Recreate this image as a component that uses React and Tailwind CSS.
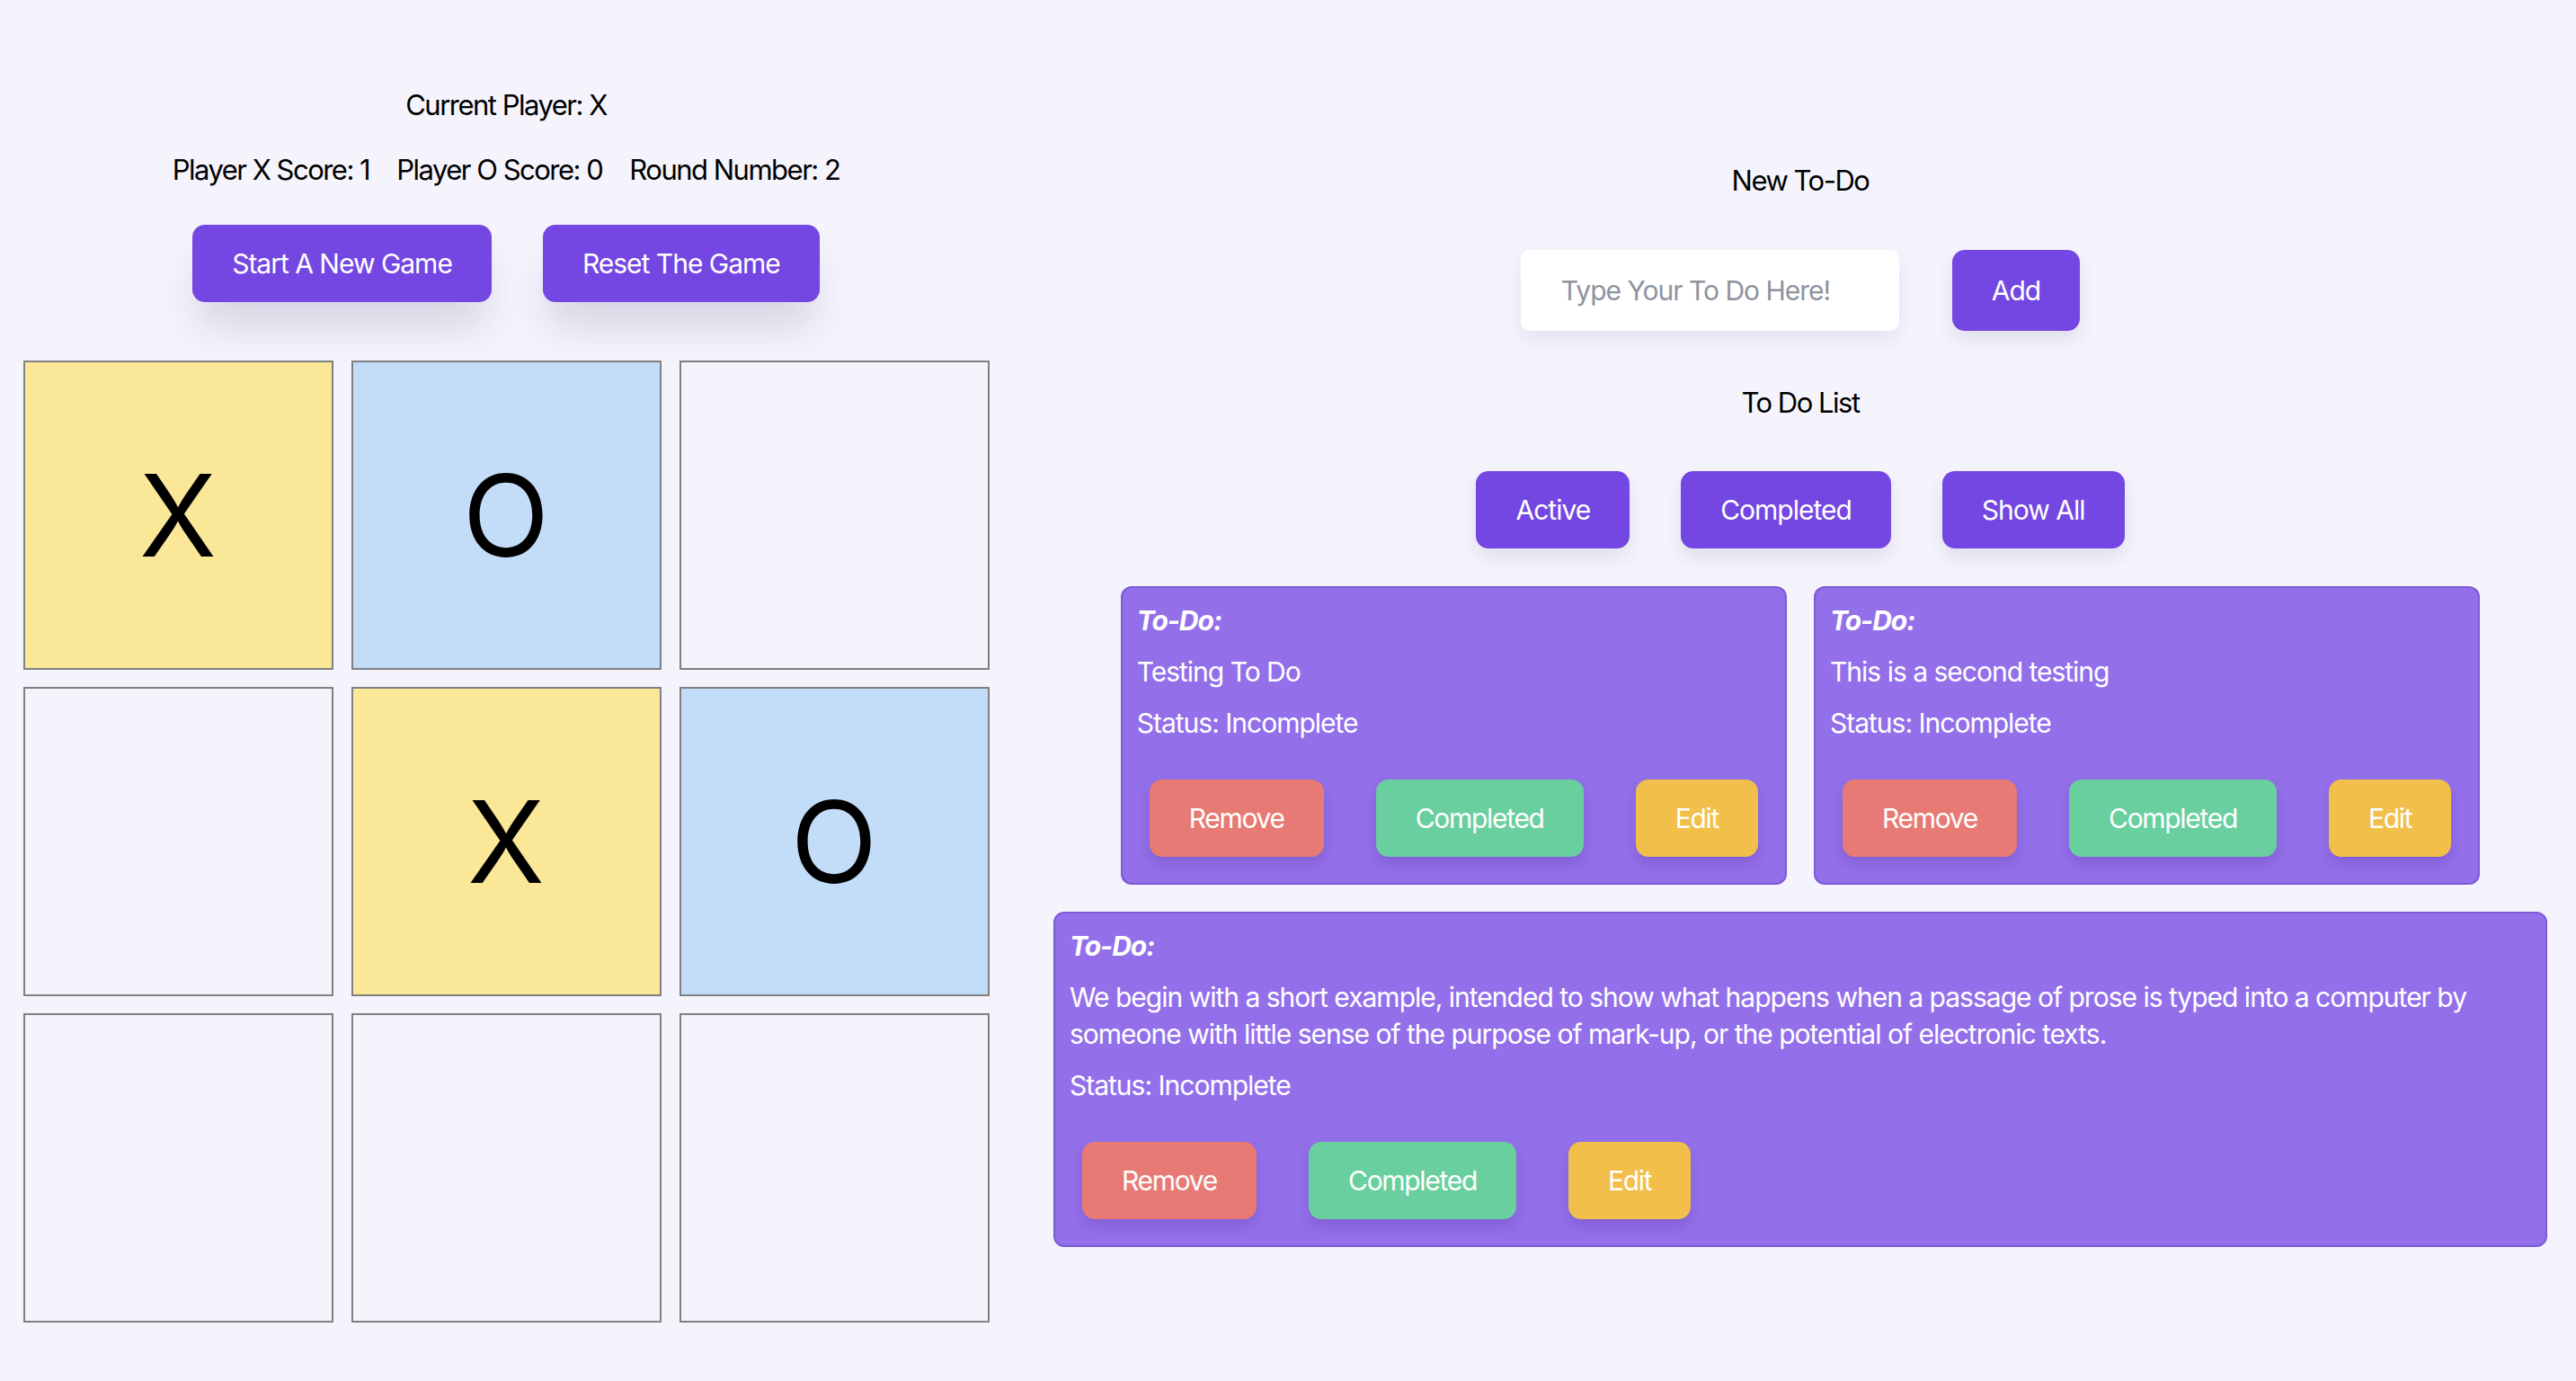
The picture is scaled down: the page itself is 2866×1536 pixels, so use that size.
import { useState } from 'react'

const purpleBtn =
  'h-[86px] px-[44px] rounded-[14px] bg-[#7447e2] text-white text-[30px] tracking-[-1px] leading-none'

const heading = 'text-[31px] tracking-[-1.5px] leading-[40px]'

const cardBtn = 'h-[86px] px-[44px] rounded-[14px] tracking-[-1.3px] shadow-[0_8px_14px_rgba(60,20,120,0.18)]'

function Cell({ value }) {
  const bg = value === 'X' ? 'bg-[#fae798]' : value === 'O' ? 'bg-[#c3dcf8]' : 'bg-[#f5f4fd]'
  return (
    <div
      className={`w-[345px] h-[344px] border-2 border-[#808080] ${bg} flex items-center justify-center text-[126px] leading-none text-black`}
    >
      {value}
    </div>
  )
}

function TodoCard({ text, status }) {
  return (
    <div className="m-[15px] rounded-[12px] border-2 border-[#7b5bd6] bg-[#9370ea] p-[16px] text-white text-[30px] tracking-[-1px] leading-[41px]">
      <p className="font-bold italic mb-[16px]">To-Do:</p>
      <p className="mb-[16px]">{text}</p>
      <p>Status: {status}</p>
      <div className="flex gap-[58px] px-[14px] mt-[42px] mb-[13px]">
        <button className={`${cardBtn} bg-[#e77a74]`}>Remove</button>
        <button className={`${cardBtn} bg-[#6acf9e]`}>Completed</button>
        <button className={`${cardBtn} bg-[#f1bf4a]`}>Edit</button>
      </div>
    </div>
  )
}

export default function App() {
  const [board] = useState(['X', 'O', '', '', 'X', 'O', '', '', ''])
  const [todos] = useState([
    { text: 'Testing To Do', status: 'Incomplete' },
    { text: 'This is a second testing', status: 'Incomplete' },
    {
      text: 'We begin with a short example, intended to show what happens when a passage of prose is typed into a computer by someone with little sense of the purpose of mark-up, or the potential of electronic texts.',
      status: 'Incomplete',
    },
  ])

  return (
    <div className="min-h-screen bg-[#f5f4fd] flex font-['Inter',sans-serif] text-black">
      {/* Tic tac toe */}
      <div className="w-[1126px] flex flex-col items-center pt-[97px]">
        <p className={heading}>Current Player: X</p>
        <div className={`flex gap-[30px] mt-[32px] ${heading}`}>
          <span>Player X Score: 1</span>
          <span>Player O Score: 0</span>
          <span>Round Number: 2</span>
        </div>
        <div className="flex gap-[57px] mt-[41px]">
          <button className={`${purpleBtn} shadow-[0_34px_44px_-6px_rgba(40,30,80,0.14)]`}>
            Start A New Game
          </button>
          <button className={`${purpleBtn} shadow-[0_34px_44px_-6px_rgba(40,30,80,0.14)]`}>
            Reset The Game
          </button>
        </div>
        <div className="grid grid-cols-[repeat(3,345px)] gap-x-[20px] gap-y-[19px] mt-[65px]">
          {board.map((v, i) => (
            <Cell key={i} value={v} />
          ))}
        </div>
      </div>

      {/* To do */}
      <div className="flex-1 pl-[14px] flex flex-col items-center pt-[181px]">
        <p className={heading}>New To-Do</p>
        <div className="flex gap-[59px] mt-[57px]">
          <input
            className="w-[421px] h-[90px] rounded-[10px] bg-white pl-[45px] text-[30px] tracking-[-1px] outline-none placeholder:text-[#8e939e] shadow-[0_10px_20px_rgba(40,30,80,0.08)]"
            placeholder="Type Your To Do Here!"
          />
          <button className={`${purpleBtn} h-[90px] shadow-[0_10px_20px_rgba(40,30,80,0.1)]`}>Add</button>
        </div>
        <p className={`${heading} mt-[60px]`}>To Do List</p>
        <div className="flex gap-[57px] mt-[56px]">
          <button className={`${purpleBtn} shadow-[0_10px_20px_rgba(40,30,80,0.1)]`}>Active</button>
          <button className={`${purpleBtn} shadow-[0_10px_20px_rgba(40,30,80,0.1)]`}>Completed</button>
          <button className={`${purpleBtn} shadow-[0_10px_20px_rgba(40,30,80,0.1)]`}>Show All</button>
        </div>
        <div className="w-full px-[17px] mt-[27px] flex flex-wrap justify-center">
          {todos.map((t, i) => (
            <TodoCard key={i} text={t.text} status={t.status} />
          ))}
        </div>
      </div>
    </div>
  )
}
